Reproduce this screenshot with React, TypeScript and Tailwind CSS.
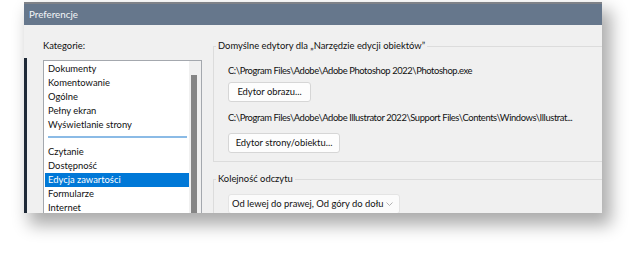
const font = { fontFamily: 'Lato, "Noto Sans", sans-serif' };

const topItems = ["Dokumenty", "Komentowanie", "Ogólne", "Pełny ekran", "Wyświetlanie strony"];
const bottomItems = ["Czytanie", "Dostępność", "Edycja zawartości", "Formularze", "Internet"];

function ListItem({ label, selected }: { label: string; selected?: boolean }) {
  return (
    <div
      className={
        "h-[14px] pl-[3px] leading-[14px] whitespace-nowrap " +
        (selected ? "bg-[#0078d7] text-white" : "text-[#111]")
      }
    >
      {label}
    </div>
  );
}

function Button({ label, width }: { label: string; width: string }) {
  return (
    <div
      className={
        "h-[20px] flex items-center justify-center whitespace-nowrap rounded-[3px] border border-[#d6d6d6] bg-[#fdfdfd] text-[#111] " +
        width
      }
    >
      {label}
    </div>
  );
}

export default function App() {
  return (
    <div className="w-[629px] h-[266px] bg-white overflow-hidden text-[9.4px]" style={font}>
      <div className="ml-[24px] mt-[2px] w-[578px] h-[211px] flex flex-col bg-[#f0f0f0] overflow-hidden shadow-[7px_10px_16px_2px_rgba(0,0,0,0.33)]">
        {/* title bar */}
        <div className="h-[23px] shrink-0 border-t-2 border-[#7f8288] bg-[#66778c] pl-[5px] flex items-center text-[9.8px] text-[#f4f6f8]">
          Preferencje
        </div>

        <div className="flex flex-1 min-h-0">
          <div className="w-[3px] mt-[33px] bg-[#1f2a38] shrink-0" />

          {/* categories */}
          <div className="pl-[16px] pt-[14px] w-[175px] shrink-0 flex flex-col">
            <div className="h-[14px] leading-[14px] text-[#111]">Kategorie:</div>
            <div className="mt-[7px] flex-1 border border-[#a4a8ae] border-b-0 bg-white flex">
              <div className="flex-1 pt-[1px] pl-[1px]">
                {topItems.map((t) => (
                  <ListItem key={t} label={t} />
                ))}
                <div className="mt-[4px] mb-[7px] ml-[3px] mr-[2px] h-[2px] bg-[#8bbbe6]" />
                {bottomItems.map((t) => (
                  <ListItem key={t} label={t} selected={t === "Edycja zawartości"} />
                ))}
              </div>
              <div className="w-[12px] bg-[#f0f0f0] pt-[14px] pl-[2px] pr-[4px]">
                <div className="h-full bg-[#858585]" />
              </div>
            </div>
          </div>

          {/* editors */}
          <div className="ml-[11px] flex-1 min-w-0 pt-[14px] text-[#111]">
            <fieldset className="border border-r-0 border-[#dcdcdc] pl-[14px] pb-[8px]">
              <legend className="-ml-[12px] px-[2px] h-[14px] leading-[14px]">
                Domyślne edytory dla „Narzędzie edycji obiektów”
              </legend>
              <div className="mt-[11px] h-[14px] leading-[14px] whitespace-nowrap tracking-[-0.4px]">
                C:\Program Files\Adobe\Adobe Photoshop 2022\Photoshop.exe
              </div>
              <div className="mt-[4px]">
                <Button label="Edytor obrazu..." width="w-[83px]" />
              </div>
              <div className="mt-[9px] h-[14px] leading-[14px] whitespace-nowrap tracking-[-0.4px]">
                C:\Program Files\Adobe\Adobe Illustrator 2022\Support Files\Contents\Windows\Illustrat...
              </div>
              <div className="mt-[8px]">
                <Button label="Edytor strony/obiektu..." width="w-[112px]" />
              </div>
            </fieldset>

            <fieldset className="mt-[10px] border border-r-0 border-[#dcdcdc] pl-[14px] pb-[8px]">
              <legend className="-ml-[12px] px-[2px] h-[14px] leading-[14px]">Kolejność odczytu</legend>
              <div className="mt-[8px] w-[172px] h-[20px] bg-[#fbfbfb] border border-[#e4e4e4] rounded-[3px] flex items-center pl-[3px] pr-[6px]">
                <span className="flex-1 whitespace-nowrap">Od lewej do prawej, Od góry do dołu</span>
                <svg width="7" height="4" viewBox="0 0 7 4" className="shrink-0">
                  <path d="M0.5 0.5 L3.5 3.5 L6.5 0.5" fill="none" stroke="#a0a0a0" strokeWidth="0.8" />
                </svg>
              </div>
            </fieldset>
          </div>
        </div>
      </div>
    </div>
  );
}
